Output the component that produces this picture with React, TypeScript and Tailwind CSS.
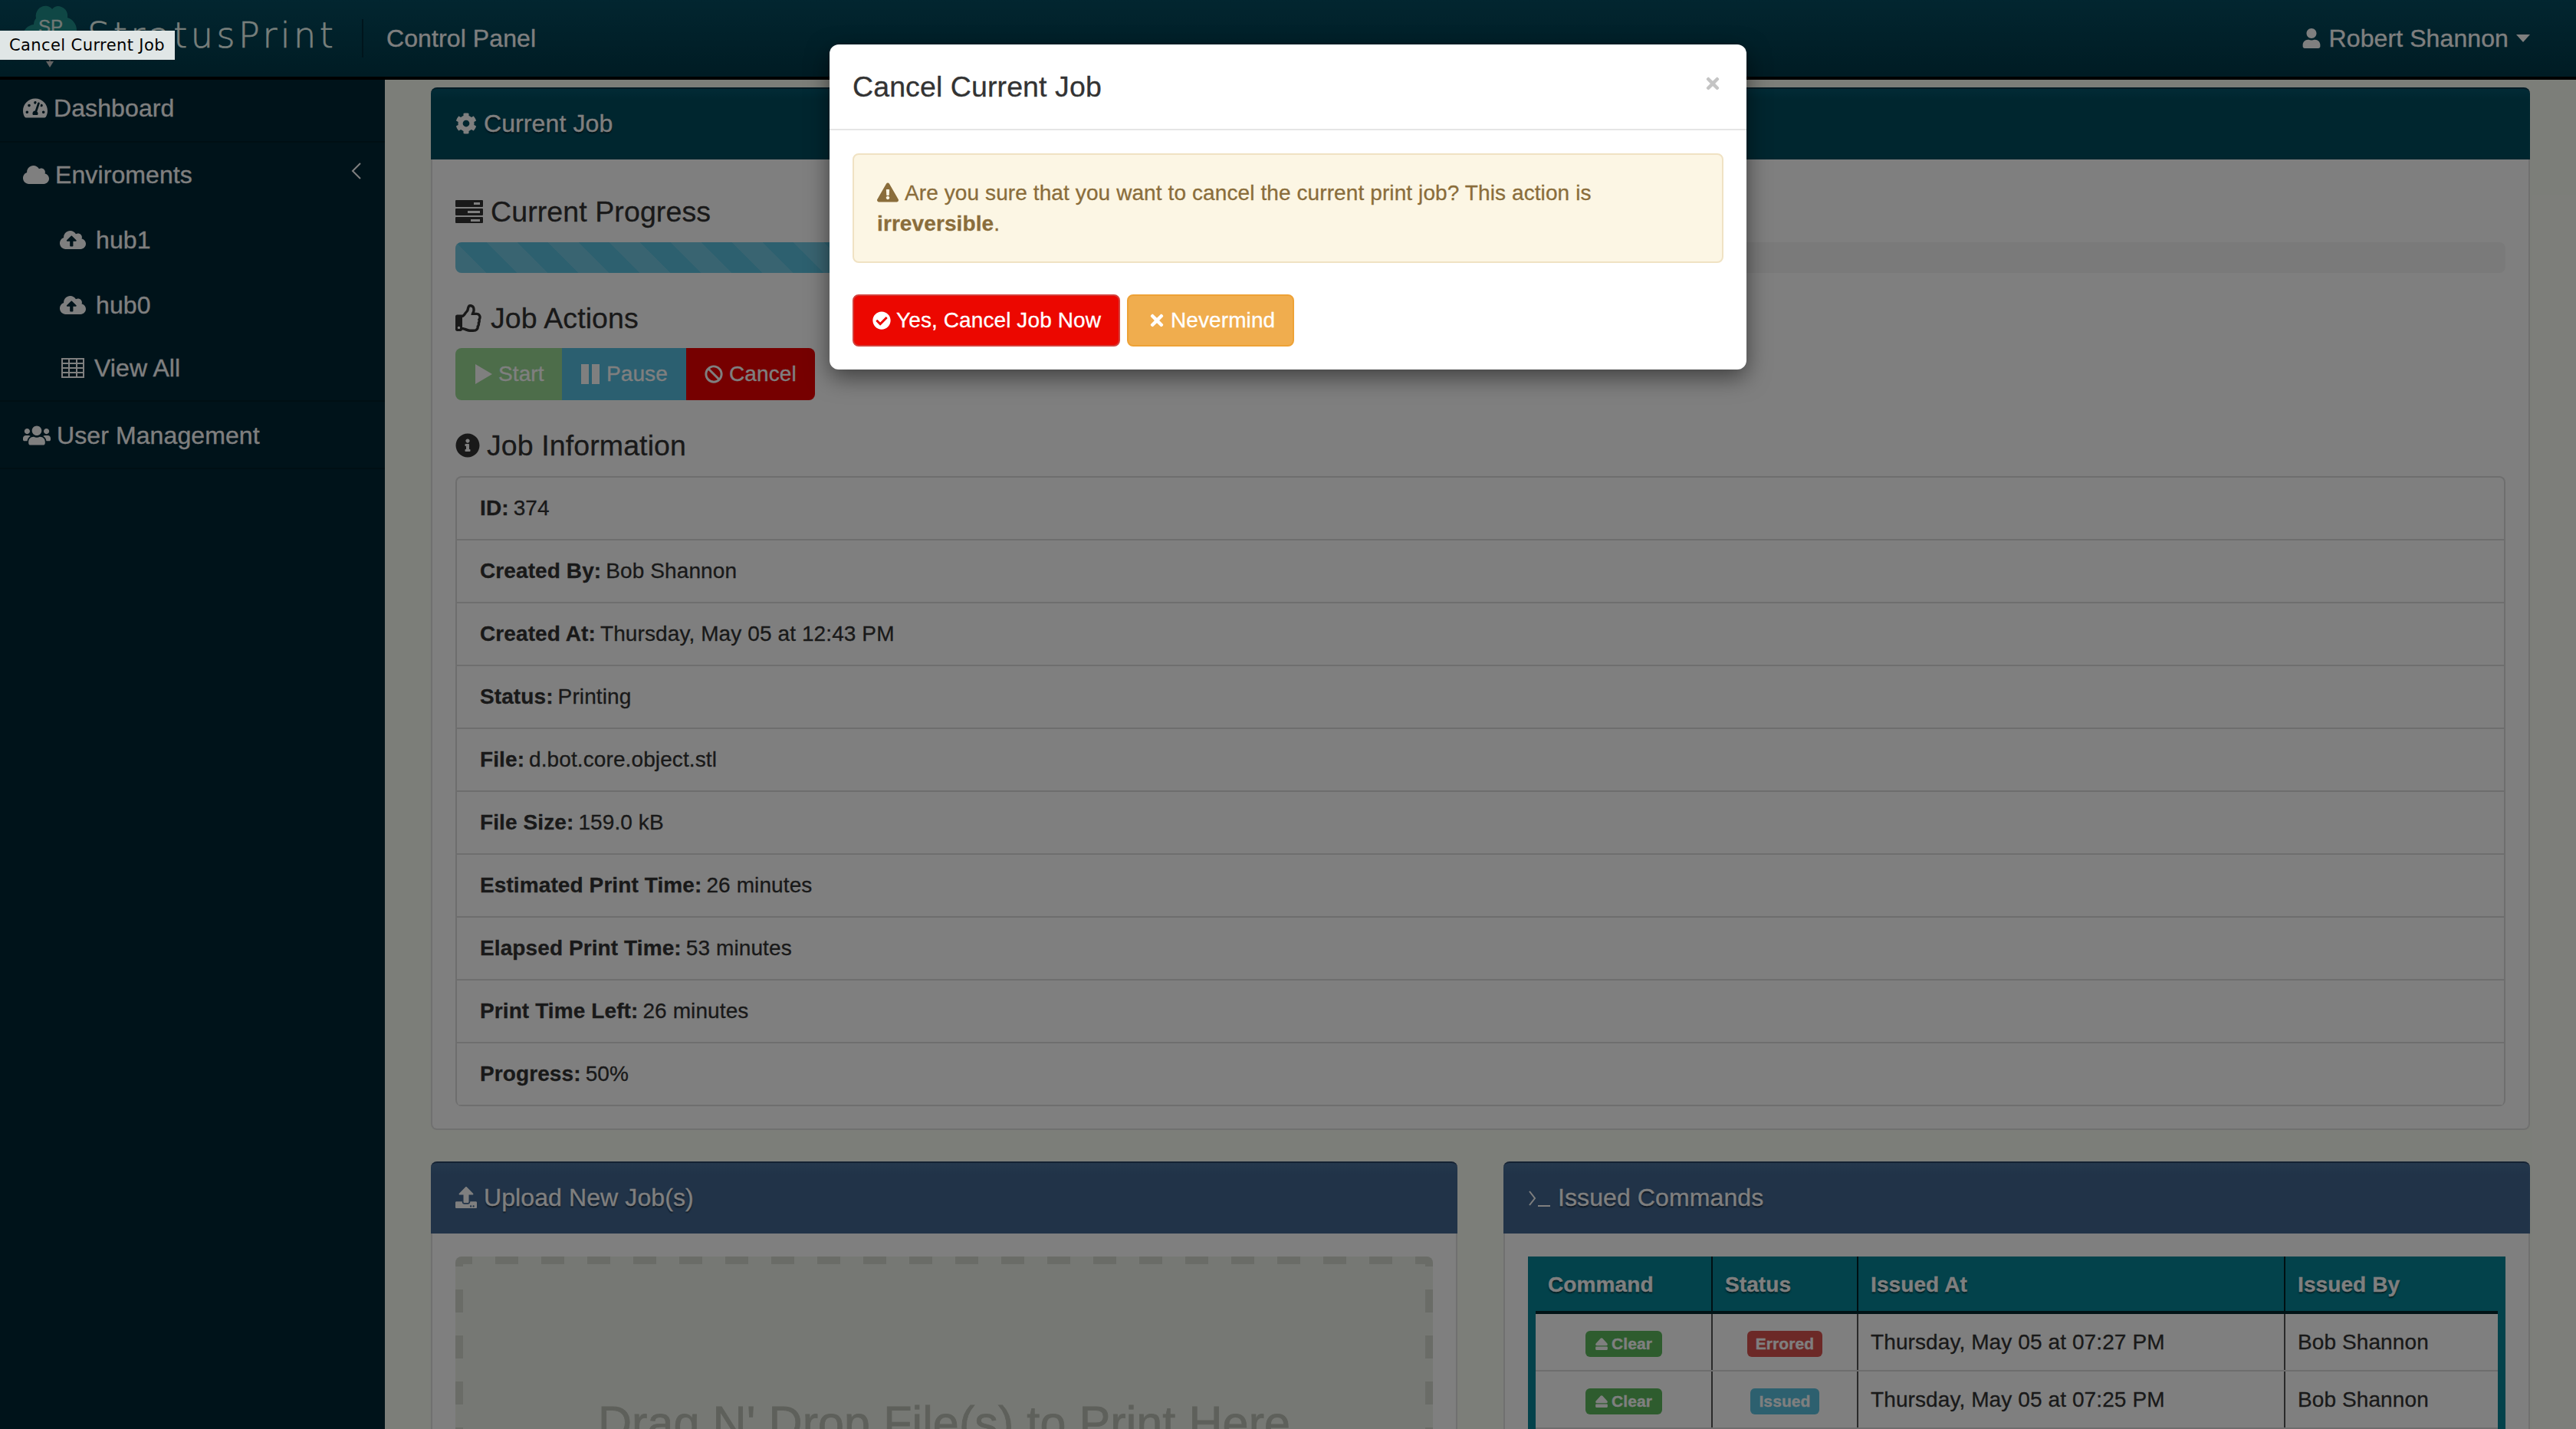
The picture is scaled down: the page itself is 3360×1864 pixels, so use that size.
import React from "react";
import {
  FaTachometerAlt, FaCloud, FaCloudUploadAlt, FaUsers, FaUser, FaCog, FaRegThumbsUp,
  FaInfoCircle, FaBan, FaUpload, FaEject, FaExclamationTriangle, FaCheckCircle, FaTimes,
} from "react-icons/fa";

const TasksIcon = () => (
  <svg width="36" height="30" viewBox="0 0 36 30" className="shrink-0">
    <path fill="#333" fillRule="evenodd" d="M1 0h34a1 1 0 0 1 1 1v7a1 1 0 0 1-1 1H1a1 1 0 0 1-1-1V1a1 1 0 0 1 1-1zm23 3v3h8V3zM1 11h34a1 1 0 0 1 1 1v7a1 1 0 0 1-1 1H1a1 1 0 0 1-1-1v-7a1 1 0 0 1 1-1zm15 3v3h16v-3zM1 22h34a1 1 0 0 1 1 1v6a1 1 0 0 1-1 1H1a1 1 0 0 1-1-1v-6a1 1 0 0 1 1-1zm19 3v3h12v-3z" />
  </svg>
);

const GridIcon = () => (
  <svg width="30" height="26" viewBox="0 0 30 26" fill="none" stroke="currentColor" strokeWidth="2" className="shrink-0 ml-[2px]">
    <rect x="1" y="1" width="28" height="24" />
    <path d="M1 7h28M1 13h28M1 19h28M10 1v24M20 1v24" />
  </svg>
);

const TerminalIcon = () => (
  <svg width="30" height="26" viewBox="0 0 30 26" fill="none" stroke="currentColor" strokeWidth="2" className="shrink-0">
    <path d="M2 5l7 9-7 9M13 24h16" />
  </svg>
);

const Logo = () => (
  <div className="relative w-[70px] h-[90px] shrink-0">
    <svg width="70" height="90" viewBox="0 0 70 90">
      <path fill="#1f8f8a" d="M14 58C4 58 0 50 0 43c0-8 6-14 14-15 0-3 1-6 3-8C15 9 24 2 32 4c3 1 5 2 6 4 3-4 8-5 12-3 6 2 9 8 8 14 7 2 12 9 12 16 0 12-8 23-20 23z" />
      <path stroke="#808080" strokeWidth="2" d="M35 62v16" />
      <path fill="#c8c8c8" d="M30 76h10l-5 8z" />
    </svg>
    <span className="absolute left-0 top-[18px] w-[70px] pl-[2px] text-center text-[24px] leading-[26px] text-[#e0f0ea]">SP</span>
  </div>
);

const NavRow = ({ icon, label, sub, cls, right }: { icon: React.ReactNode; label: string; sub?: boolean; cls: string; right?: React.ReactNode }) => (
  <div className={`flex items-center text-[32px] text-white ${sub ? "pl-[78px] gap-[13px]" : "pl-[30px] gap-[8px]"} ${cls}`}>
    {icon}
    <span>{label}</span>
    {right}
  </div>
);

const PanelHead = ({ icon, label, main }: { icon: React.ReactNode; label: string; main?: boolean }) => (
  <div
    className={`-mx-[2px] h-[94px] flex items-center gap-[9px] pl-[32px] pb-[2px] text-[32px] text-white rounded-t-[8px] border-t-2 [text-shadow:0_2px_2px_rgba(0,0,0,0.6)] ${
      main
        ? "bg-[linear-gradient(#05566c,#004c5f_14px)] border-[#00364a]"
        : "bg-[linear-gradient(#4a7099,#426791_14px)] border-[#2a4466]"
    }`}
  >
    {icon}
    <span>{label}</span>
  </div>
);

const Heading = ({ icon, label, cls }: { icon: React.ReactNode; label: string; cls: string }) => (
  <div className={`flex items-center text-[37.5px] leading-[40px] text-[#333] ${cls}`}>
    {icon}
    <span>{label}</span>
  </div>
);

const info: [string, string][] = [
  ["ID:", "374"],
  ["Created By:", "Bob Shannon"],
  ["Created At:", "Thursday, May 05 at 12:43 PM"],
  ["Status:", "Printing"],
  ["File:", "d.bot.core.object.stl"],
  ["File Size:", "159.0 kB"],
  ["Estimated Print Time:", "26 minutes"],
  ["Elapsed Print Time:", "53 minutes"],
  ["Print Time Left:", "26 minutes"],
  ["Progress:", "50%"],
];

const cmds = [
  { status: "Errored", color: "bg-[#d9534f]", w: "w-[98px]", at: "Thursday, May 05 at 07:27 PM" },
  { status: "Issued", color: "bg-[#5bc0de]", w: "w-[90px]", at: "Thursday, May 05 at 07:25 PM" },
];

export default function App() {
  return (
    <div className="relative w-[3360px] h-[1864px] overflow-hidden bg-[#f9fcf3] font-['Liberation_Sans',Arial,sans-serif] text-[28px] leading-[40px] tracking-[0.1px] text-[#333] [-webkit-text-stroke:0.3px]">
      <header className="h-[104px] flex items-center border-b-4 border-black bg-[linear-gradient(#054c60,#003848)] text-white">
        <div className="pl-[30px] pt-[4px] self-start"><Logo /></div>
        <span className="ml-[14px] w-[358px] pb-[8px] font-['DejaVu_Sans',sans-serif] font-extralight text-[46px] text-[#f0fff8] tracking-[4.5px] [-webkit-text-stroke:0.6px]">StratusPrint</span>
        <span className="h-[50px] w-[2px] bg-[#002a38]" />
        <span className="ml-[30px] text-[32px]">Control Panel</span>
        <div className="ml-auto pr-[60px] flex items-center gap-[10px] text-[32px]">
          <FaUser size={26} />
          <span>Robert Shannon</span>
          <span className="w-0 h-0 border-x-[9px] border-x-transparent border-t-[10px] border-t-white" />
        </div>
      </header>

      <div className="flex h-[1760px]">
        <aside className="w-[502px] shrink-0 bg-[#002634]">
          <NavRow icon={<FaTachometerAlt size={32} />} label="Dashboard" cls="h-[82px] pb-[7px] border-b-2 border-[#001e29]" />
          <NavRow icon={<FaCloud size={34} />} label="Enviroments" cls="h-[84px] relative"
            right={
              <svg width="14" height="24" viewBox="0 0 14 24" fill="none" stroke="currentColor" strokeWidth="2" className="absolute right-[30px] top-[25px]">
                <path d="M12 2L2 12l10 10" />
              </svg>
            } />
          <NavRow sub icon={<FaCloudUploadAlt size={34} />} label="hub1" cls="h-[85px]" />
          <NavRow sub icon={<FaCloudUploadAlt size={34} />} label="hub0" cls="h-[85px]" />
          <NavRow sub icon={<GridIcon />} label="View All" cls="h-[84px] pb-[2px] border-b-2 border-[#001e29]" />
          <NavRow icon={<FaUsers size={36} />} label="User Management" cls="h-[88px] pt-[2px] border-b-2 border-[#001e29]" />
        </aside>

        <main className="flex-1 px-[60px] pt-[10px]">
          <section className="h-[1360px] rounded-[8px] bg-white border-x-2 border-b-2 border-[#e0e0e0]">
            <PanelHead main icon={<FaCog size={28} />} label="Current Job" />
            <div className="px-[30px]">
              <Heading icon={<TasksIcon />} label="Current Progress" cls="gap-[10px] pt-[48px]" />
              <div className="mt-[20px] h-[40px] rounded-[8px] bg-[#f5f5f5] overflow-hidden">
                <div className="h-full w-1/2 bg-[#5bc0de] [background-image:repeating-linear-gradient(45deg,rgba(255,255,255,0.15)_0_28.3px,transparent_28.3px_56.6px)]" />
              </div>
              <Heading icon={<FaRegThumbsUp size={36} className="shrink-0" />} label="Job Actions" cls="gap-[10px] pt-[39px]" />
              <div className="mt-[19px] flex h-[68px] w-fit rounded-[8px] overflow-hidden text-white">
                <div className="w-[139px] bg-[#9bda94] flex items-center gap-[8px] pl-[26px]">
                  <svg width="22" height="26" viewBox="0 0 22 26"><path fill="currentColor" d="M0 0l22 13L0 26z" /></svg>
                  Start
                </div>
                <div className="w-[162px] bg-[#56bee0] flex items-center gap-[9px] pl-[25px]">
                  <svg width="24" height="26" viewBox="0 0 24 26"><path fill="currentColor" d="M0 0h10v26H0zM14 0h10v26H14z" /></svg>
                  Pause
                </div>
                <div className="w-[168px] bg-[#ec0000] flex items-center gap-[8px] pl-[24px]">
                  <FaBan size={24} />
                  Cancel
                </div>
              </div>
              <Heading icon={<FaInfoCircle size={32} className="shrink-0" />} label="Job Information" cls="gap-[9px] pt-[39px]" />
              <div className="mt-[20px] rounded-[8px] border-2 border-[#ddd] border-b-0 overflow-hidden">
                {info.map(([k, v]) => (
                  <div key={k} className="h-[82px] flex items-center gap-[6px] px-[30px] pb-[1px] border-b-2 border-[#ddd]">
                    <b>{k}</b>
                    <span>{v}</span>
                  </div>
                ))}
              </div>
            </div>
          </section>

          <div className="mt-[41px] grid grid-cols-[1339px_1339px] gap-[60px]">
            <section className="h-[500px] rounded-[8px] bg-white border-x-2 border-[#e0e0e0]">
              <PanelHead icon={<FaUpload size={28} />} label="Upload New Job(s)" />
              <div className="mx-[30px] mt-[30px] h-[400px] rounded-[8px] pt-[182px] text-center text-[61px] leading-[70px] text-[#bcc0b6] [-webkit-text-stroke:0.8px] [background:repeating-linear-gradient(90deg,#d4d8ce_0_22px,transparent_22px_52px,#d4d8ce_52px_60px)_top/100%_10px_no-repeat,repeating-linear-gradient(90deg,#d4d8ce_0_22px,transparent_22px_52px,#d4d8ce_52px_60px)_bottom/100%_10px_no-repeat,repeating-linear-gradient(180deg,#d4d8ce_0_13px,transparent_13px_43px,#d4d8ce_43px_60px)_left/10px_100%_no-repeat,repeating-linear-gradient(180deg,#d4d8ce_0_13px,transparent_13px_43px,#d4d8ce_43px_60px)_right/10px_100%_no-repeat,#edf0e8]">
                Drag N' Drop File(s) to Print Here
              </div>
            </section>

            <section className="h-[500px] rounded-[8px] bg-white border-x-2 border-[#e0e0e0]">
              <PanelHead icon={<TerminalIcon />} label="Issued Commands" />
              <div className="mx-[30px] mt-[30px] bg-[#068496] px-[10px]">
                <div className="grid grid-cols-[231px_190px_557px_284px] h-[75px] items-stretch font-bold text-white [text-shadow:0_2px_2px_rgba(0,0,0,0.6)] border-b-4 border-[#03262c]">
                  <div className="flex items-center pl-[16px] pt-[3px] border-r-2 border-[#012026]">Command</div>
                  <div className="flex items-center pl-[16px] pt-[3px] border-r-2 border-[#012026]">Status</div>
                  <div className="flex items-center pl-[16px] pt-[3px] border-r-2 border-[#012026]">Issued At</div>
                  <div className="flex items-center pl-[16px] pt-[3px]">Issued By</div>
                </div>
                {cmds.map((c) => (
                  <div key={c.at} className="grid grid-cols-[231px_190px_557px_284px] h-[75px] bg-white border-b-2 border-[#ddd]">
                    <div className="flex items-center justify-center pt-[5px] border-r-2 border-[#555]">
                      <span className="w-[100px] h-[34px] rounded-[6px] bg-[#5cb85c] text-white text-[21px] font-bold flex items-center justify-center gap-[4px]">
                        <FaEject size={18} />Clear
                      </span>
                    </div>
                    <div className="flex items-center justify-center pt-[5px] border-r-2 border-[#555]">
                      <span className={`${c.w} h-[34px] rounded-[6px] ${c.color} text-white text-[21px] font-bold flex items-center justify-center`}>{c.status}</span>
                    </div>
                    <div className="flex items-center pl-[16px] border-r-2 border-[#555]">{c.at}</div>
                    <div className="flex items-center pl-[16px]">Bob Shannon</div>
                  </div>
                ))}
              </div>
            </section>
          </div>
        </main>
      </div>

      <div className="absolute inset-0 bg-black/50" />

      <div className="absolute left-0 top-[40px] w-[228px] h-[38px] bg-[#e0e6e6] text-black text-[21px] leading-[38px] pl-[12px] font-['DejaVu_Sans',sans-serif] tracking-[0.4px] whitespace-nowrap [-webkit-text-stroke:0px]">
        Cancel Current Job
      </div>

      <div className="absolute left-[1082px] top-[58px] w-[1196px] h-[424px] bg-white rounded-[12px] shadow-[0_10px_30px_rgba(0,0,0,0.5)]">
        <div className="h-[112px] flex items-center justify-between pl-[30px] pr-[32px] border-b-2 border-[#e5e5e5]">
          <h2 className="text-[37.5px] text-[#333]">Cancel Current Job</h2>
          <FaTimes size={24} className="text-[#c4c4c4] mb-[8px]" />
        </div>
        <div className="px-[30px] pt-[30px]">
          <div className="h-[143px] rounded-[8px] border-2 border-[#f0e2c3] bg-[#fcf6e4] px-[30px] pt-[30px] text-[#8a6d3b]">
            <FaExclamationTriangle size={28} className="inline-block mr-[8px] align-[-4px]" />
            Are you sure that you want to cancel the current print job? This action is <b>irreversible</b>.
          </div>
          <div className="mt-[41px] flex gap-[9px] text-white">
            <div className="w-[349px] h-[68px] rounded-[8px] bg-[#ec0700] border-2 border-[#d43f3a] flex items-center gap-[7px] pl-[24px]">
              <FaCheckCircle size={24} />
              Yes, Cancel Job Now
            </div>
            <div className="w-[218px] h-[68px] rounded-[8px] bg-[#f0ad4e] border-2 border-[#eea236] flex items-center gap-[6px] pl-[25px]">
              <FaTimes size={24} />
              Nevermind
            </div>
          </div>
        </div>
      </div>
    </div>
  );
}
